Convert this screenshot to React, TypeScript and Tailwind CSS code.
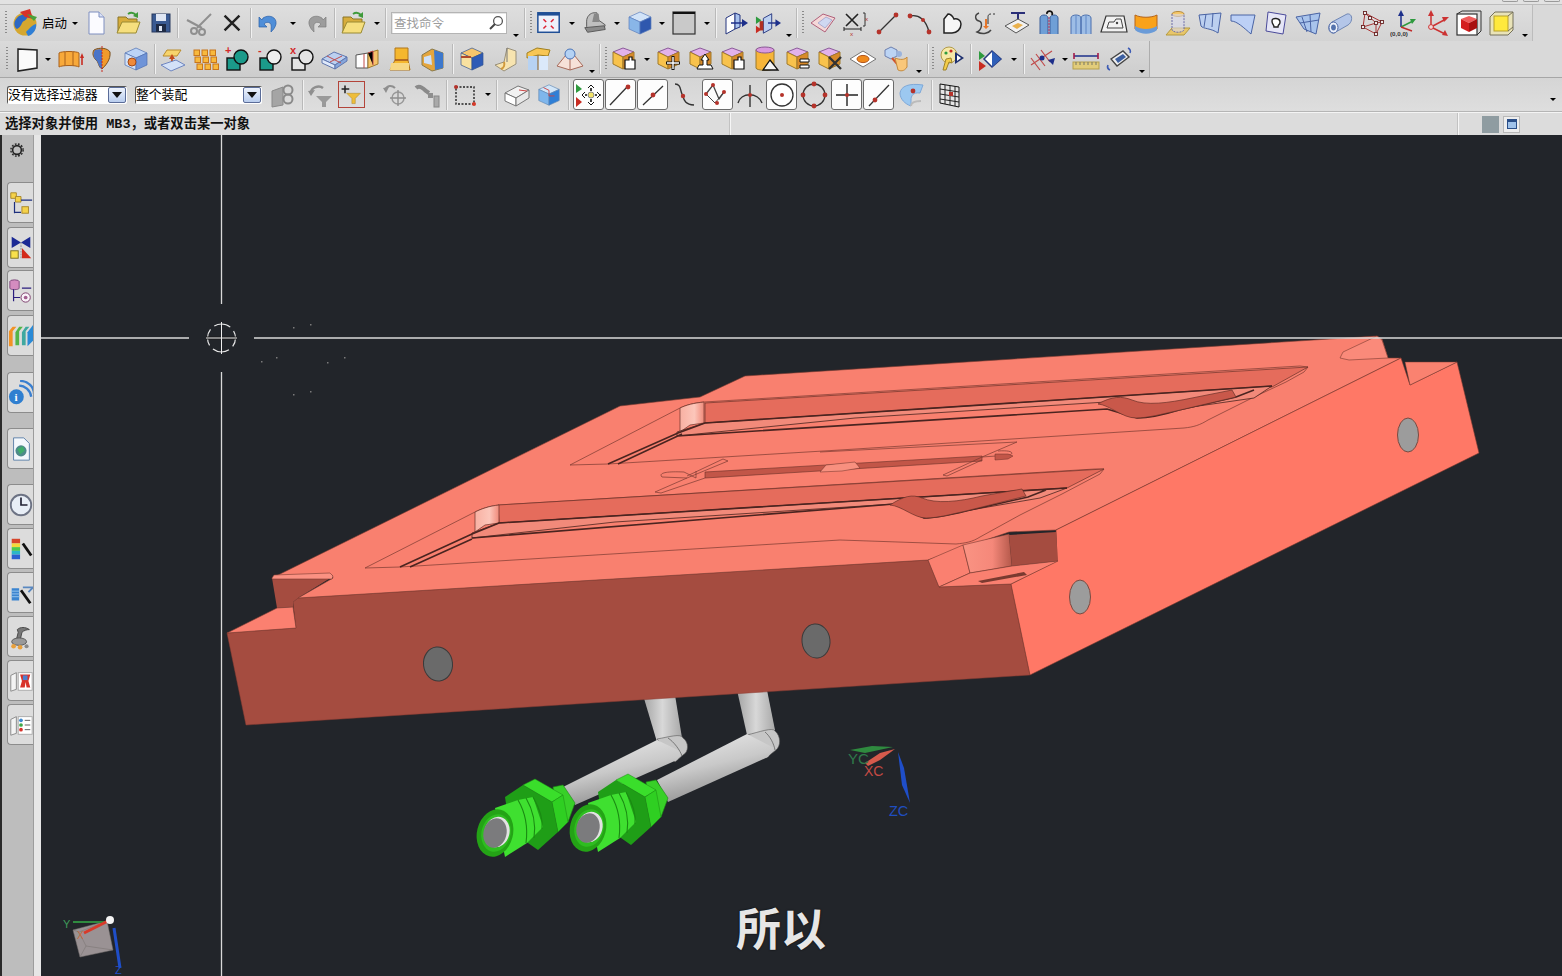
import type { ReactNode } from "react";

const CJK = "font-['Noto_Sans_CJK_SC','Noto_Sans',sans-serif]";

// ---- small pieces of the toolbars ----
const Slot = ({ w, children }: { w: string; children?: ReactNode }) => (
  <div className={`flex h-full shrink-0 items-center justify-center ${w}`}>{children}</div>
);

const Sep = () => <div className="mx-0 h-[30px] w-px shrink-0 bg-[#f1f1f1] shadow-[-1px_0_0_#b9b9b9]" />;

const Grip = ({ w }: { w: string }) => (
  <div className={`flex h-full shrink-0 items-center justify-center ${w}`}>
    <div className="h-[24px] w-[2px] bg-[repeating-linear-gradient(to_bottom,#8a8a8a_0,#8a8a8a_1px,transparent_1px,transparent_3px)]" />
  </div>
);

const Caret = ({ w }: { w: string }) => (
  <Slot w={w}>
    <div className="h-0 w-0 border-x-[3px] border-t-[3px] border-x-transparent border-t-black" />
  </Slot>
);

const LowCaret = ({ w }: { w: string }) => (
  <div className={`flex h-full shrink-0 items-end justify-center pb-[4px] ${w}`}>
    <div className="h-0 w-0 border-x-[3px] border-t-[3px] border-x-transparent border-t-black" />
  </div>
);

const Ic = ({ children, size = "h-[28px] w-[28px]" }: { children: ReactNode; size?: string }) => (
  <svg viewBox="0 0 28 28" className={`block ${size}`}>
    {children}
  </svg>
);

const Cube = ({ t = "#ffe08a", l = "#f7b733", r = "#e78a1e", s = "#8a6a3a" }: { t?: string; l?: string; r?: string; s?: string }) => (
  <g stroke={s} strokeWidth="0.7">
    <polygon points="14,3 25,8 14,13 3,8" fill={t} />
    <polygon points="3,8 14,13 14,25 3,20" fill={l} />
    <polygon points="25,8 14,13 14,25 25,20" fill={r} />
  </g>
);

const Dot = ({ x, y, r = 2 }: { x: number; y: number; r?: number }) => <circle cx={x} cy={y} r={r} fill="#b5332b" />;

const ln = { stroke: "#333", strokeWidth: 1.4, fill: "none" } as const;

// ---- row 1 icons ----
const r1Series: ReactNode[] = [
  <><polygon points="2,14 14,5 26,9 16,23" fill="#f4d8d8" stroke="#b0607a" strokeWidth="1" /><path d="M9 14l8-6 6 3-7 8z" fill="#cfd8f2" stroke="#8a8fc0" strokeWidth=".6" /></>,
  <><path d="M5 5l12 12M17 5L5 17" stroke="#222" strokeWidth="1.6" /><path d="M3 20h17M3 18v4M20 18v4" stroke="#222" strokeWidth="1" /><path d="M22 4h2v13h-2" {...ln} strokeWidth="1" /><text x="24" y="12" fontSize="6" fill="#b5332b">x</text><text x="9" y="27" fontSize="6" fill="#b5332b">x</text></>,
  <><path d="M5 23L22 6" stroke="#333" strokeWidth="1.3" /><Dot x={5} y={23} r={2.4} /><Dot x={22} y={6} r={2.4} /></>,
  <><path d="M4 7c9-2 16 4 19 16" stroke="#333" strokeWidth="1.4" fill="none" /><Dot x={4} y={7} r={2.4} /><Dot x={17} y={11} r={2} /><Dot x={23} y={23} r={2.4} /></>,
  <path d="M6 24V10l4-5c3 0 5 3 6 5 3-1 7 1 7 5 0 5-4 9-9 9z" fill="#f6f6f6" stroke="#222" strokeWidth="1.5" />,
  <><path d="M8 4c-5 2-4 7 0 8s3 9-2 11c6 3 12 1 14-2" stroke="#444" strokeWidth="1.4" fill="none" /><path d="M20 5c-3 0-3 2-3 4v6M24 5h-2" stroke="#333" fill="none" /><path d="M14 10v7h-2l3 3 3-3h-2v-7z" fill="#e7762a" /></>,
  <><path d="M8 4h14M15 4v8" stroke="#2a2f78" strokeWidth="2" /><polygon points="2,17 15,10 26,16 13,24" fill="#f1f1f1" stroke="#555" /><polygon points="9,17 15,14 20,16 14,20" fill="#e9b04c" /></>,
  <><path d="M5 25V9c0-4 8-4 8 0v16M15 25V9c0-4 8-4 8 0v16" fill="#6f9fd6" stroke="#3a5f9a" /><path d="M12 5c-1-4 7-4 5 1" stroke="#111" strokeWidth="1.8" fill="none" /><path d="M14 8v17" stroke="#b03060" strokeDasharray="2 1" /></>,
  <><path d="M3 25V9c0-4 10-4 10 0v16M13 25V9c0-4 10-4 10 0v16" fill="#9dbde6" stroke="#4a6fae" /><path d="M8 7v18M18 7v18" stroke="#5f86c4" /></>,
  <><polygon points="6,7 24,7 27,23 1,23" fill="#f2f2f2" stroke="#333" strokeWidth="1.2" /><path d="M7 19l2-6h5l2-3h5l2 9z" fill="none" stroke="#444" /><circle cx="17" cy="14" r="1.2" fill="#444" /></>,
  <><path d="M3 6c6 3 16 3 22 0v14c-6 4-16 4-22 0z" fill="#f9a21b" stroke="#b5651d" /><path d="M3 17c6 4 16 4 22 0v4c-6 5-16 5-22 0z" fill="#6a9bd8" /></>,
  <><polygon points="2,26 8,19 26,19 20,26" fill="#e8c66a" stroke="#b59a3c" /><ellipse cx="14" cy="5" rx="6" ry="2.5" fill="#f5c76a" stroke="#b58a3c" /><path d="M8 5v16c2 3 10 3 12 0V5" fill="#d9d9ea" fillOpacity=".6" stroke="#6d6da8" strokeDasharray="2 1" /></>,
  <><path d="M2 6l22-2-3 20C14 19 6 20 4 17z" fill="#bcd0f0" stroke="#4a64a4" /><path d="M9 5l-2 13M16 4l-1 14" stroke="#4a64a4" /></>,
  <path d="M2 6h24l-4 19C15 19 8 12 2 12z" fill="#bcd0f6" stroke="#4a64a4" />,
  <><path d="M7 3l18 3-3 19-17-3z" fill="#e6e6f6" stroke="#4a4a9a" /><path d="M11 12c0-4 8-3 8 1s-2 1-2 5h-4c0-3-2-2-2-6z" fill="#fff" stroke="#222" strokeWidth="1.4" /></>,
  <><polygon points="2,8 26,4 22,25 10,20" fill="#a9c4ec" stroke="#4a64a4" /><path d="M6 14l19-3M8 8l5 15M16 6l1 17" stroke="#4a64a4" fill="none" /></>,
  <><path d="M6 13L21 5c6-1 6 8 1 11L8 24C2 25 1 16 6 13z" fill="#b4c6e8" stroke="#7087b4" /><ellipse cx="7.5" cy="18.5" rx="4.5" ry="5.5" fill="#eef2fb" stroke="#4a64a4" /><ellipse cx="7.5" cy="18.5" rx="2.4" ry="3" fill="#5573ad" /></>,
  <><path d="M7 4l-2 14 13 7 6-12z" fill="none" stroke="#a33" /><path d="M7 4l11 10-13 4M18 14v11M18 14l6-1" stroke="#a33" fill="none" />{[[7, 4], [5, 18], [18, 25], [24, 13], [18, 14], [12, 9]].map(([x, y], i) => <rect key={i} x={x - 1.5} y={y - 1.5} width="3" height="3" fill="#eee" stroke="#622" strokeWidth=".9" />)}</>,
  <><path d="M11 18V4" stroke="#1d2f8a" strokeWidth="1.5" /><polygon points="11,1 8,7 14,7" fill="#1d2f8a" /><path d="M11 18l12-6" stroke="#2e9a3e" strokeWidth="1.5" /><polygon points="26,10 20,10 22,15" fill="#2e9a3e" /><path d="M11 18l11 4" stroke="#c02b2b" strokeWidth="1.5" /><text x="0" y="27" fontSize="6.2" fontWeight="700" fill="#333" fontFamily="Liberation Sans">(0,0,0)</text></>,
  <><path d="M8 18V5M8 18l15-8M8 18l14 7" stroke="#c33" strokeWidth="1.5" /><polygon points="8,1 5,7 11,7" fill="#c33" /><polygon points="26,8 19,8 21,13" fill="#c33" /><polygon points="25,27 19,26 22,21" fill="#c33" /><circle cx="8" cy="18" r="2.4" fill="#f3d8d8" stroke="#c33" /></>,
  <><rect x="2" y="5" width="20" height="21" fill="#fff" stroke="#333" strokeWidth="1.2" /><path d="M2 5l5-3h19v20l-4 4" fill="none" stroke="#333" /><polygon points="14,7 22,10 14,14 6,10" fill="#f05a5a" /><polygon points="6,10 14,14 14,23 6,19" fill="#d41f1f" /><polygon points="22,10 14,14 14,23 22,19" fill="#a81212" /></>,
  <><path d="M3 8l5-5h18v18l-5 5H3z" fill="#e9e3b8" stroke="#75705a" /><rect x="7" y="7" width="14" height="15" fill="#ffe93d" stroke="#b8a12c" /><path d="M21 7l5-4M21 22l5-4" stroke="#75705a" /></>,
];

const Row1 = () => (
  <div className="flex h-[36px] w-[1533px] items-center border-r border-[#bcbcbc] bg-[linear-gradient(to_bottom,#dedede,#d3d3d3)]">
    <Grip w="w-[12px]" />
    <Slot w="w-[28px]">
      <Ic>
        <circle cx="13" cy="15" r="11.5" fill="#d5a72f" />
        <path d="M3 12c3-7 10-8 15-5-3 0-3 4-6 5s-2 6-7 8c-3-2-3-6-2-8z" fill="#2d68c4" />
        <path d="M14 23c3-3 6-7 10-8 1 5-3 11-8 12z" fill="#2f7fd6" />
        <polygon points="8,3 18,0 21,10 13,8" fill="#d8322a" />
        <path d="M15 5l10 3-3 4" fill="#49a23c" />
      </Ic>
    </Slot>
    <div className={`${CJK} w-[29px] shrink-0 text-center text-[12.5px] leading-none text-black`}>启动</div>
    <Caret w="w-[11px]" />
    <Slot w="w-[32px]">
      <Ic><path d="M7 3h10l5 5v17H7z" fill="#fbfbff" stroke="#7f8fc0" /><path d="M17 3v5h5" fill="#dbe2f6" stroke="#7f8fc0" /></Ic>
    </Slot>
    <Slot w="w-[31px]">
      <Ic><path d="M4 8h8l2 2h9v4H9l-5 9z" fill="#d7ad3c" stroke="#8a7526" /><path d="M8 13h18l-4 11H3z" fill="#f6df7e" stroke="#9a8a32" /><path d="M14 5c3-2 6-1 8 1" stroke="#3f9a3a" strokeWidth="2" fill="none" /><polygon points="24,9 19,7 24,3" fill="#3f9a3a" /></Ic>
    </Slot>
    <Slot w="w-[35px]">
      <Ic><rect x="5" y="5" width="18" height="18" fill="#3a5a92" stroke="#26395f" /><rect x="9" y="5" width="10" height="7" fill="#dfe6f3" /><rect x="9" y="15" width="10" height="8" fill="#1f2b45" /><rect x="12" y="17" width="3" height="5" fill="#dfe6f3" /></Ic>
    </Slot>
    <Sep />
    <Slot w="w-[40px]">
      <Ic><g stroke="#8f8f8f" strokeWidth="2" fill="none"><path d="M2 11l15 8" /><path d="M26 5L12 19" /><circle cx="17" cy="23" r="3" /><circle cx="9" cy="22" r="3" /></g></Ic>
    </Slot>
    <Slot w="w-[26px]">
      <Ic><path d="M6 6l16 16M22 6L6 22" stroke="#222" strokeWidth="2.6" /></Ic>
    </Slot>
    <div className="w-[6px] shrink-0" />
    <Sep />
    <Slot w="w-[34px]">
      <Ic><path d="M8 9c6-4 14-1 13 6-1 4-3 6-5 8 0-4 1-7-1-9-2-1-4-1-6 1l3 3H4V8l3 3z" fill="#4f8ed8" stroke="#2a5fa8" strokeWidth=".7" /></Ic>
    </Slot>
    <Caret w="w-[14px]" />
    <Slot w="w-[32px]">
      <Ic><path d="M20 9c-6-4-14-1-13 6 1 4 3 6 5 8 0-4-1-7 1-9 2-1 4-1 6 1l-3 3h8V8l-3 3z" fill="#9d9d9d" stroke="#7c7c7c" strokeWidth=".7" /></Ic>
    </Slot>
    <div className="w-[3px] shrink-0" />
    <Sep />
    <Slot w="w-[34px]">
      <Ic><path d="M4 8h8l2 2h9v4H9l-5 9z" fill="#d7ad3c" stroke="#8a7526" /><path d="M8 13h18l-4 11H3z" fill="#f6df7e" stroke="#9a8a32" /><path d="M14 5c3-2 6-1 8 1" stroke="#3f9a3a" strokeWidth="2" fill="none" /><polygon points="24,9 19,7 24,3" fill="#3f9a3a" /></Ic>
    </Slot>
    <Caret w="w-[14px]" />
    <div className="w-[2px] shrink-0" />
    <Sep />
    <div className="ml-[4px] flex h-[22px] w-[116px] shrink-0 items-center justify-between border border-[#b4b4b4] bg-white pl-[2px] pr-[2px] shadow-[inset_1px_1px_0_#e6e6e6]">
      <span className={`${CJK} text-[12.5px] leading-none text-[#9c9c9c]`}>查找命令</span>
      <svg viewBox="0 0 16 16" className="h-[16px] w-[16px]">
        <circle cx="10" cy="6" r="4.4" fill="#fff" stroke="#555" strokeWidth="1.3" />
        <path d="M7 9l-5 5" stroke="#444" strokeWidth="2" />
      </svg>
    </div>
    <LowCaret w="w-[18px]" />
    <Sep />
    <Grip w="w-[10px]" />
    <Slot w="w-[26px]">
      <Ic><rect x="2" y="3" width="23" height="21" fill="#eef1fa" stroke="#1f4f96" strokeWidth="1.6" /><rect x="2" y="3" width="23" height="3" fill="#1f4f96" /><path d="M8 10l3 3M19 10l-3 3M8 20l3-3M19 20l-3-3" stroke="#d23" strokeWidth="1.6" /></Ic>
    </Slot>
    <Caret w="w-[20px]" />
    <Slot w="w-[26px]">
      <Ic><path d="M5 18V12c0-5 4-9 8-9h3l2 8 7 5-1 3-17 2z" fill="#c0c0c0" stroke="#555" /><path d="M13 4l5 0 1 9h-8z" fill="#888" /><polygon points="3,19 24,17 25,21 6,24" fill="#8c8c8c" stroke="#555" /></Ic>
    </Slot>
    <Caret w="w-[18px]" />
    <Slot w="w-[28px]">
      <Ic><Cube t="#d1e3f8" l="#89b6e8" r="#2f58ae" s="#5b7ebd" /></Ic>
    </Slot>
    <Caret w="w-[16px]" />
    <Slot w="w-[28px]">
      <Ic><rect x="3" y="3" width="22" height="22" fill="#c9c9c9" stroke="#333" strokeWidth="1.2" /><rect x="3" y="3" width="22" height="2" fill="#111" /></Ic>
    </Slot>
    <Caret w="w-[18px]" />
    <Sep />
    <Slot w="w-[38px]">
      <Ic><polygon points="4,9 13,4 13,20 4,25" fill="#fdfdfd" stroke="#25357e" /><polygon points="13,4 18,6 18,18 13,20" fill="#a9c3ee" stroke="#25357e" /><path d="M9 14h12" stroke="#1d2f8a" strokeWidth="1.5" /><polygon points="26,14 20,10 20,18" fill="#1d2f8a" /></Ic>
    </Slot>
    <Slot w="w-[26px]">
      <Ic><polygon points="9,9 18,4 18,20 9,25" fill="#bcd0f0" stroke="#25357e" /><path d="M14 14h9" stroke="#1d2f8a" strokeWidth="1.5" /><polygon points="28,14 22,10 22,18" fill="#1d2f8a" /><polygon points="1,7 7,11 1,15" fill="#2e9a3e" /><polygon points="1,17 7,21 1,25" fill="#c82c22" /><rect x="5" y="12" width="4" height="10" fill="#b03020" /></Ic>
    </Slot>
    <LowCaret w="w-[16px]" />
    <Sep />
    <Grip w="w-[9px]" />
    {r1Series.map((ic, i) => (
      <Slot key={i} w="w-[32.3px]"><Ic>{ic}</Ic></Slot>
    ))}
    <LowCaret w="w-[15px]" />
  </div>
);

// ---- row 2 icons ----
const BoolIc = ({ mark, circle, square, color }: { mark: string; circle: string; square: string; color: string }) => (
  <Ic>
    <rect x="3" y="13" width="13" height="12" fill={square} stroke="#111" strokeWidth="1.4" />
    <circle cx="17" cy="12" r="7" fill={circle} stroke="#111" strokeWidth="1.4" />
    <text x="1" y="9" fontSize="11" fontWeight="700" fill={color} fontFamily="Liberation Sans">{mark}</text>
  </Ic>
);

const Face = ({ children }: { children?: ReactNode }) => (
  <Ic>
    <polygon points="12,3 23,7 12,12 2,7" fill="#e2b2ea" stroke="#8a5a9a" />
    <polygon points="2,7 12,12 12,24 2,19" fill="#f8c24c" stroke="#a07a2a" />
    <polygon points="23,7 12,12 12,24 23,19" fill="#d98a2a" stroke="#a07a2a" />
    {children}
  </Ic>
);

const HandMark = () => <path d="M14 15h4v-3h3v3h3v9H14z" fill="#fff" stroke="#111" strokeWidth="1.2" />;

const Row2 = () => (
  <div className="flex h-[36px] w-[1150px] items-center border-r border-[#adadad] bg-[linear-gradient(to_bottom,#dadada,#cdcdcd)]">
    <Grip w="w-[13px]" />
    <Slot w="w-[28px]"><Ic><polygon points="5,4 24,5 24,23 5,26" fill="#fafafa" stroke="#222" strokeWidth="1.5" /></Ic></Slot>
    <Caret w="w-[14px]" />
    <Slot w="w-[30px]"><Ic><path d="M3 22V8c2-2 18-2 20 0v14c-3-2-17-2-20 0z" fill="#f8a93a" stroke="#a8601c" /><path d="M9 7v14M17 7v14" stroke="#a8601c" /><path d="M26 20v-8" stroke="#c82c22" strokeWidth="1.6" /><polygon points="26,8 24,13 28,13" fill="#c82c22" /></Ic></Slot>
    <Slot w="w-[32px]"><Ic><path d="M7 5c5-3 14-2 16 2 1 8-5 14-8 17-4-2-3-7-6-9-3-3-4-7-2-10z" fill="#f19a2c" stroke="#7a4f1c" /><path d="M8 5c3-1 6-1 7 0v19c-4-2-3-7-6-9-3-3-3-7-1-10z" fill="#4a74c8" /><path d="M15 1v26" stroke="#c82c22" strokeDasharray="2 1" /></Ic></Slot>
    <Slot w="w-[38px]"><Ic><Cube t="#bcd4f6" l="#cfe0f8" r="#6f94d8" s="#4d6fb0" /><circle cx="10" cy="17" r="4" fill="#ef8a3a" stroke="#a14a1a" /></Ic></Slot>
    <Sep />
    <Slot w="w-[34px]"><Ic><polygon points="8,5 22,5 18,11 4,11" fill="#f7d46c" stroke="#b98c2c" /><path d="M13 19v-8" stroke="#c54c1c" strokeWidth="1.8" /><polygon points="13,9 10,14 16,14" fill="#c54c1c" /><polygon points="2,20 17,15 26,20 12,26" fill="#d3e1f8" stroke="#6f86c0" /></Ic></Slot>
    <Slot w="w-[32.3px]"><Ic>{[[2, 5], [10, 5], [18, 5], [3, 12], [11, 12], [19, 12], [5, 19], [13, 19], [21, 19]].map(([x, y], i) => <rect key={i} x={x} y={y} width="5.5" height="5.5" fill="#f8b93c" stroke="#c8761c" />)}</Ic></Slot>
    <Slot w="w-[32.3px]"><BoolIc mark="+" circle="#1b9a8a" square="#1b9a8a" color="#d32a2a" /></Slot>
    <Slot w="w-[32.3px]"><BoolIc mark="-" circle="#eeeeee" square="#1b9a8a" color="#d32a2a" /></Slot>
    <Slot w="w-[32.3px]"><BoolIc mark="x" circle="#e4e4e4" square="#e4e4e4" color="#d32a2a" /></Slot>
    <Slot w="w-[32.3px]"><Ic><polygon points="1,14 13,7 26,12 14,20" fill="#bcd0f0" stroke="#5f76ae" /><polygon points="1,14 14,20 14,24 1,18" fill="#dfe9fa" stroke="#5f76ae" /><polygon points="26,12 14,20 14,24 26,16" fill="#86a6dc" stroke="#5f76ae" /><path d="M6 11l14 7M9 17l12-6" stroke="#c14b4b" /></Ic></Slot>
    <Slot w="w-[32.3px]"><Ic><polygon points="2,10 14,8 14,23 2,23" fill="#fff" stroke="#555" /><polygon points="14,8 24,5 24,19 14,23" fill="#f6c36a" stroke="#a07a2a" /><path d="M10 9v14M14 8l5-2v14" stroke="#c14b4b" /></Ic></Slot>
    <Slot w="w-[32.3px]"><Ic><path d="M9 3h13v12l2 10H4l5-10z" fill="#f5b72e" stroke="#b0771c" /><path d="M9 15h13" stroke="#8a3a1a" strokeWidth="1.2" /><path d="M5 18l18 0v7H4z" fill="#f7d884" /></Ic></Slot>
    <Slot w="w-[32.3px]"><Ic><polygon points="14,4 25,8 25,23 14,26 4,20 4,10" fill="#e4a53c" stroke="#8a7a4a" /><polygon points="16,5 25,8 25,23 17,25" fill="#3d78cc" /><polygon points="6,12 13,10 14,20 6,18" fill="#cfe0f6" /></Ic></Slot>
    <div className="w-[5px] shrink-0" />
    <Sep />
    <Slot w="w-[36px]"><Ic><Cube t="#f7c66c" l="#f8e1a0" r="#2e5bb6" s="#33558f" /><rect x="3" y="11" width="10" height="2" fill="#b04a2a" /></Ic></Slot>
    <Slot w="w-[32px]"><Ic><path d="M15 3l9 3v13l-12 7-9-6 9-3z" fill="#f7e4b0" stroke="#99907a" /><path d="M15 3v14" stroke="#777" /><path d="M12 17c1 3 0 6-3 7" stroke="#d19a3c" fill="none" strokeWidth="2" /></Ic></Slot>
    <Slot w="w-[32px]"><Ic><polygon points="3,8 13,3 26,5 24,11 14,10 3,13" fill="#f8c654" stroke="#a0801f" /><rect x="4" y="11" width="10" height="14" fill="#b7d2f2" /><rect x="14" y="11" width="10" height="14" fill="#dbe9fa" /><path d="M14 10v15" stroke="#8a5c1a" /></Ic></Slot>
    <Slot w="w-[32px]"><Ic><polygon points="14,5 27,21 14,25 1,21" fill="#f6e1d8" stroke="#a66a5a" /><path d="M14 5v20" stroke="#a66a5a" /><circle cx="14" cy="9" r="5" fill="#b4d2f4" stroke="#4a74b8" /></Ic></Slot>
    <LowCaret w="w-[12px]" />
    <div className="w-[2px] shrink-0" />
    <Sep />
    <Grip w="w-[9px]" />
    <Slot w="w-[30px]"><Face><HandMark /></Face></Slot>
    <Caret w="w-[13px]" />
    <Slot w="w-[32.3px]"><Face><path d="M17 11v14M10 18h14" stroke="#111" strokeWidth="3" /><path d="M17 12v12M11 18h12" stroke="#fff" strokeWidth="1.4" /></Face></Slot>
    <Slot w="w-[32.3px]"><Face><polygon points="17,9 21,15 19,15 19,20 23,20 25,24 9,24 11,20 15,20 15,15 13,15" fill="#fff" stroke="#111" /></Face></Slot>
    <Slot w="w-[32.3px]"><Face><HandMark /></Face></Slot>
    <Slot w="w-[32.3px]"><Ic><path d="M4 5c0-3 18-3 18 0v18c0 3-18 3-18 0z" fill="#f7b53a" stroke="#9a7a2a" /><ellipse cx="13" cy="5" rx="9" ry="3" fill="#d99ae0" stroke="#8a5a9a" /><polygon points="18,15 26,25 11,25" fill="#f5f5f5" stroke="#111" strokeWidth="1.3" /></Ic></Slot>
    <Slot w="w-[32.3px]"><Face><path d="M15 14h9v3h-9zM15 20h9v3h-9z" fill="#fff" stroke="#111" /></Face></Slot>
    <Slot w="w-[32.3px]"><Face><path d="M12 12l12 12M24 12L12 24" stroke="#333" strokeWidth="2.4" /></Face></Slot>
    <Slot w="w-[32.3px]"><Ic><polygon points="14,6 27,14 14,22 1,14" fill="#fff" stroke="#777" /><ellipse cx="14" cy="14" rx="6" ry="3.6" fill="#f08a1c" stroke="#b2551c" /></Ic></Slot>
    <Slot w="w-[32.3px]"><Ic><polygon points="3,5 9,2 15,5 15,11 9,14 3,11" fill="#bcd4f4" stroke="#6d7fae" /><path d="M10 13l6 7" stroke="#d2522b" strokeWidth="2" /><path d="M13 13c5 2 10 2 12-1v10c-3 5-7 4-9 3z" fill="#f9c77a" stroke="#c58a3c" /><circle cx="17" cy="9" r="3" fill="#9ab3dc" /></Ic></Slot>
    <LowCaret w="w-[14px]" />
    <div className="w-[2px] shrink-0" />
    <Sep />
    <Grip w="w-[9px]" />
    <Slot w="w-[28px]"><Ic><circle cx="11" cy="10" r="8" fill="#f6e9a8" stroke="#b29a4c" /><circle cx="8" cy="8" r="1.6" fill="#2e9a3e" /><circle cx="13" cy="6" r="1.6" fill="#c82c22" /><path d="M8 14l-3 11h3l3-8 3 1-1-5z" fill="#f4cd4a" stroke="#9f8329" /><polygon points="17,7 26,13 17,19" fill="#1d2f6e" /><polygon points="19,10 23,13 19,16" fill="#fff" /></Ic></Slot>
    <div className="w-[5px] shrink-0" />
    <Sep />
    <Slot w="w-[36px]"><Ic><polygon points="3,6 9,11 3,15" fill="#2e9a3e" /><polygon points="3,16 10,21 3,26" fill="#c82c22" /><polygon points="16,6 25,14 16,22 8,14" fill="#fff" stroke="#27397c" strokeWidth="1.5" /><polygon points="16,6 25,14 16,22" fill="#2f5fb8" /></Ic></Slot>
    <Caret w="w-[12px]" />
    <div className="w-[4px] shrink-0" />
    <Sep />
    <Slot w="w-[34px]"><Ic><path d="M3 20L24 6M3 13l9 12M8 9l9 12M13 5l9 12" stroke="#c14b4b" strokeWidth="1.2" /><circle cx="14" cy="13" r="2.5" fill="#1d2f8a" /><polygon points="25,20 20,15 27,13" fill="#1d2f8a" /></Ic></Slot>
    <Caret w="w-[12px]" />
    <Slot w="w-[30px]"><Ic><path d="M2 11h24" stroke="#1d2f8a" strokeWidth="1.5" /><path d="M2 8v6M26 8v6" stroke="#a31b4a" strokeWidth="1.6" /><rect x="1" y="17" width="26" height="7" fill="#e2cc7a" stroke="#b5a04c" /><path d="M4 17v3M8 17v3M12 17v3M16 17v3M20 17v3M24 17v3" stroke="#776" /></Ic></Slot>
    <Slot w="w-[36px]"><Ic><polygon points="6,14 18,6 24,12 12,21" fill="#efefef" stroke="#444" strokeWidth="1.4" /><polygon points="10,14 18,9 21,12 13,18" fill="#3c5fa0" /><path d="M3 20c-1 2 0 4 2 5M25 8c1-2 0-4-2-5" stroke="#3d5bb4" strokeWidth="1.6" fill="none" /></Ic></Slot>
    <LowCaret w="w-[10px]" />
  </div>
);

// ---- row 3 ----
const Select = ({ w, label, gap }: { w: string; label: string; gap?: string }) => (
  <div className={`flex h-[18px] shrink-0 items-center justify-between rounded-[2px] bg-white pl-px pr-px shadow-[inset_1px_1px_0_#555] ${w} ${gap ?? ""}`}>
    <span className={`${CJK} text-[12.8px] leading-none text-black`}>{label}</span>
    <div className="flex h-[16px] w-[18px] items-center justify-center rounded-[2px] border border-[#5a6c98] bg-[linear-gradient(to_bottom,#eef3fc,#b9cdee)]">
      <div className="h-0 w-0 border-x-[5px] border-t-[6px] border-x-transparent border-t-[#111]" />
    </div>
  </div>
);

const Snap = ({ on, children }: { on?: boolean; children: ReactNode }) => (
  <Slot w="w-[32.3px]">
    <div className={`flex h-[31px] w-[31px] items-center justify-center rounded-[3px] ${on ? "border border-[#6b6b6b] bg-[#fdfdfd]" : ""}`}>
      <Ic>{children}</Ic>
    </div>
  </Slot>
);

const Row3 = () => (
  <div className="flex h-[34px] items-center border-b border-[#b5b5b5] bg-[linear-gradient(to_bottom,#d5d5d5,#dedede)]">
    <div className="w-[7px] shrink-0" />
    <Select w="w-[120px]" label="没有选择过滤器" />
    <Select w="w-[127px]" label="整个装配" gap="ml-[8px]" />
    <Slot w="w-[41px]"><Ic><polygon points="3,10 14,6 14,24 3,26" fill="#a5a5a5" stroke="#8a8a8a" /><circle cx="19" cy="9" r="4.5" fill="none" stroke="#8a8a8a" strokeWidth="2" /><circle cx="19" cy="18" r="4.5" fill="none" stroke="#8a8a8a" strokeWidth="2" /></Ic></Slot>
    <Sep />
    <Slot w="w-[32px]"><Ic><polygon points="10,15 26,15 20,21 20,26 16,26 16,21" fill="#9a9a9a" /><path d="M5 12c0-6 8-8 12-5" stroke="#8f8f8f" strokeWidth="2.6" fill="none" /><polygon points="2,10 9,9 5,15" fill="#8f8f8f" /></Ic></Slot>
    <Slot w="w-[30px]"><div className="flex h-[27px] w-[27px] items-center justify-center border border-[#b3443a]"><Ic size="h-[24px] w-[24px]"><path d="M7 3v9M3 7h9" stroke="#222" strokeWidth="1.8" /><polygon points="9,12 25,12 19,18 19,24 15,24 15,18" fill="#eebd3a" stroke="#a07a1a" strokeWidth=".5" /></Ic></div></Slot>
    <Caret w="w-[12px]" />
    <Slot w="w-[34px]"><Ic><path d="M4 9c2-5 7-5 10-2" stroke="#8f8f8f" strokeWidth="2" fill="none" /><polygon points="2,7 8,6 5,12" fill="#8f8f8f" /><circle cx="17" cy="17" r="6" fill="none" stroke="#999" strokeWidth="1.4" /><path d="M17 9v16M9 17h16" stroke="#8f8f8f" strokeWidth="1.4" /></Ic></Slot>
    <Slot w="w-[32px]"><Ic><path d="M2 7c3-3 7 0 10 3l3 2" stroke="#8a8a8a" strokeWidth="4" fill="none" /><rect x="14" y="12" width="5" height="5" fill="#8f8f8f" /><rect x="20" y="15" width="5" height="11" fill="#aaa" stroke="#888" /></Ic></Slot>
    <div className="w-[3px] shrink-0" />
    <Sep />
    <Slot w="w-[34px]"><Ic><rect x="5" y="6" width="18" height="17" fill="none" stroke="#222" strokeWidth="1.4" strokeDasharray="2 1.5" /><circle cx="5" cy="6" r="2" fill="#b5332b" /><circle cx="23" cy="23" r="2" fill="#d63a2a" /></Ic></Slot>
    <Caret w="w-[12px]" />
    <div className="w-[3px] shrink-0" />
    <Sep />
    <Slot w="w-[38px]"><Ic><polygon points="2,12 15,5 26,9 13,17" fill="#f2f2f2" stroke="#777" /><polygon points="2,12 13,17 13,25 2,20" fill="#fff" stroke="#777" /><polygon points="26,9 13,17 13,25 26,17" fill="#e8e8e8" stroke="#777" /><path d="M16 9l8 1" stroke="#c44" /></Ic></Slot>
    <Slot w="w-[26px]"><Ic><Cube t="#d2e6f8" l="#7fb6ec" r="#2f7fd6" s="#5f86b4" /><path d="M8 6l6 3v6l6 0" stroke="#c44" fill="none" /></Ic></Slot>
    <div className="w-[7px] shrink-0" />
    <Sep />
    <div className="w-[2px] shrink-0" />
    <Snap on>
      <polygon points="2,3 8,8 2,12" fill="#2e9a3e" /><polygon points="2,16 8,21 2,26" fill="#c82c22" />
      <circle cx="17" cy="14" r="3" fill="#f2e268" stroke="#888" />
      <path d="M17 4v6M17 18v6M8 14h5M21 14h6" stroke="#111" strokeWidth="1.6" />
      <path d="M14 7l3-3 3 3M14 21l3 3 3-3M11 11l-3 3 3 3M23 11l3 3-3 3" fill="#fff" stroke="#111" />
    </Snap>
    <Snap on><path d="M4 24L21 6" stroke="#333" strokeWidth="1.3" /><Dot x={22} y={6} r={2.4} /></Snap>
    <Snap on><path d="M4 24L24 5" stroke="#333" strokeWidth="1.3" /><Dot x={14} y={14} r={2.4} /></Snap>
    <Snap><path d="M4 3c6 0 5 6 7 10 2 4 1 10 12 11" stroke="#333" strokeWidth="1.4" fill="none" /><Dot x={12} y={15} r={2.2} /></Snap>
    <Snap on><path d="M3 13L10 4l6 14 5-7" stroke="#444" strokeWidth="1.3" fill="none" /><path d="M3 13l9 9 9-11" stroke="#444" fill="none" /><Dot x={3} y={13} /><Dot x={10} y={4} /><Dot x={21} y={11} /><Dot x={14} y={22} /></Snap>
    <Snap><path d="M2 22C5 11 22 11 26 22M14 4v22" stroke="#333" strokeWidth="1.4" fill="none" /><Dot x={14} y={14} /></Snap>
    <Snap on><circle cx="14" cy="14" r="11" fill="#fff" stroke="#333" strokeWidth="1.3" /><Dot x={14} y={14} /></Snap>
    <Snap><circle cx="14" cy="14" r="11" fill="none" stroke="#333" strokeWidth="1.3" /><Dot x={14} y={3} r={2.4} /><Dot x={14} y={25} r={2.4} /><Dot x={3} y={14} r={2.4} /><Dot x={25} y={14} r={2.4} /></Snap>
    <Snap on><path d="M3 14h22M14 3v22" stroke="#222" strokeWidth="1.4" /><Dot x={14} y={14} /></Snap>
    <Snap on><path d="M4 25L24 4" stroke="#333" strokeWidth="1.3" /><Dot x={10} y={19} r={2.4} /></Snap>
    <Snap><path d="M3 12C4 5 12 2 26 4l-3 8c-7-1-9 3-9 7 0 3 0 4 0 6-6-2-11-7-11-13z" fill="#9cc8f0" stroke="#7ea8d8" /><path d="M14 25c0-3 3-5 10-5" stroke="#bbb" strokeWidth="2" fill="none" /><Dot x={16} y={10} r={2.4} /></Snap>
    <div className="w-[5px] shrink-0" />
    <Sep />
    <Slot w="w-[32px]"><Ic><polygon points="5,3 24,6 24,26 5,22" fill="#e5e5e5" stroke="#111" /><path d="M5 8l19 3M5 13l19 3M5 18l19 3M10 4v19M15 5v19M20 5v20" stroke="#222" /><rect x="14" y="11" width="4" height="4" fill="#b5332b" /></Ic></Slot>
    <div className="ml-auto mr-[6px] mt-[10px] h-0 w-0 border-x-[3px] border-t-[3px] border-x-transparent border-t-black" />
  </div>
);

const StatusBar = () => (
  <div className="flex h-[23px] items-center border-t border-[#f4f4f4] bg-[#dcdcdc]">
    <div className={`${CJK} w-[730px] shrink-0 pl-[5px] text-[13.3px] font-bold leading-none text-[#111]`}>
      选择对象并使用<span className="font-['Liberation_Mono',monospace] text-[13.5px]"> MB3</span>，或者双击某一对象
    </div>
    <div className="h-full w-px shrink-0 bg-[#f6f6f6] shadow-[-1px_0_0_#c2c2c2]" />
    <div className="w-[727px] shrink-0" />
    <div className="h-full w-px shrink-0 bg-[#f6f6f6] shadow-[-1px_0_0_#c2c2c2]" />
    <div className="ml-[23px] flex items-center gap-[4px]">
      <div className="h-[17px] w-[17px] bg-[#8f9ca1]" />
      <div className="flex h-[17px] w-[17px] items-center justify-center border border-[#b8b8b8] bg-[#eeeeee]">
        <div className="h-[10px] w-[10px] border border-[#2a4e88] bg-[linear-gradient(to_bottom,#2a4e88_30%,#9fc2ea_30%)]" />
      </div>
    </div>
  </div>
);

// ---- left resource bar ----
const SideBtn = ({ gap, children }: { gap: string; children: ReactNode }) => (
  <div className={`flex h-[41px] w-[26px] shrink-0 items-center justify-start overflow-hidden rounded-l-[4px] border-y border-l border-[#8c8c8c] bg-[#dcdcdc] [&>svg]:h-[26px] [&>svg]:w-[26px] [&>svg]:shrink-0 ${gap}`}>
    {children}
  </div>
);

const Side = () => (
  <div className="flex h-[841px] w-[41px] shrink-0 border-l-2 border-[#2a2a2a] bg-[#bdbdbd]">
    <div className="flex w-[31px] shrink-0 flex-col items-end">
      <div className="flex h-[30px] w-full items-center justify-center">
        <svg viewBox="0 0 16 16" className="mr-[1px] h-[14px] w-[14px]">
          <circle cx="8" cy="8" r="5" fill="none" stroke="#222" strokeWidth="1.8" />
          <circle cx="8" cy="8" r="7" fill="none" stroke="#222" strokeWidth="1.6" strokeDasharray="2 1.7" />
        </svg>
      </div>
      <SideBtn gap="mt-[17px]">
        <Ic><polygon points="3,3 9,3 9,9 3,9" fill="#f5d24a" stroke="#a8872a" /><polygon points="8,7 14,7 14,13 8,13" fill="#f5d24a" stroke="#a8872a" /><path d="M7 13v12M7 24h7M14 11h12" stroke="#1d2f7e" strokeWidth="1.3" /><rect x="15" y="18" width="7" height="7" fill="#f5d24a" stroke="#a8872a" /></Ic>
      </SideBtn>
      <SideBtn gap="mt-[4px]">
        <Ic><polygon points="4,2 14,8 4,14" fill="#1c2a94" /><polygon points="24,2 14,8 24,14" fill="#1c2a94" /><rect x="3" y="17" width="8" height="8" fill="#f8e04c" stroke="#7a6d1f" /><polygon points="15,14 25,25 15,25" fill="#d32a1a" /><path d="M14 8v18" stroke="#888" strokeDasharray="2 1" /></Ic>
      </SideBtn>
      <SideBtn gap="mt-[2px]">
        <Ic><ellipse cx="7" cy="4" rx="5" ry="2" fill="#d48cc0" stroke="#7a4a7a" /><path d="M2 4v7c0 2 10 2 10 0V4" fill="#d48cc0" stroke="#7a4a7a" /><path d="M6 12v13M6 21h7M15 11h10" stroke="#2a1d7e" strokeWidth="1.3" /><circle cx="19" cy="21" r="5" fill="#f8f2f8" stroke="#7a3a6a" /><circle cx="19" cy="21" r="2" fill="#a35f90" /></Ic>
      </SideBtn>
      <SideBtn gap="mt-[4px]">
        <Ic><polygon points="1,9 5,4 9,4 5,9 5,25 1,25" fill="#f29224" /><polygon points="8,10 12,4 16,4 12,9 12,24 8,24" fill="#55b548" /><polygon points="15,10 19,4 23,4 19,9 19,24 15,24" fill="#3fa8a0" /><polygon points="21,10 27,2 27,19 21,25" fill="#2a8ad6" /></Ic>
      </SideBtn>
      <SideBtn gap="mt-[16px]">
        <Ic><circle cx="9" cy="18" r="8" fill="#2f7fd0" /><text x="7" y="23" fontSize="12" fontWeight="700" fill="#fff" fontFamily="Liberation Serif">i</text><path d="M12 6c6 0 12 5 13 12M13 1c8 0 15 6 15 14" stroke="#3a7fd0" strokeWidth="2.5" fill="none" /></Ic>
      </SideBtn>
      <SideBtn gap="mt-[15px]">
        <Ic><path d="M6 2h11l6 6v18H6z" fill="#f4f8fc" stroke="#5b7ea6" /><circle cx="14" cy="16" r="6" fill="#4f8a8a" /><path d="M10 14l6-3 2 5-5 4z" fill="#3fae6a" /></Ic>
      </SideBtn>
      <SideBtn gap="mt-[15px]">
        <Ic><circle cx="14" cy="14" r="11" fill="#e8eef6" stroke="#6d7384" strokeWidth="2" /><path d="M14 6v8h7" stroke="#223" strokeWidth="1.8" fill="none" /></Ic>
      </SideBtn>
      <SideBtn gap="mt-[3px]">
        <Ic><rect x="4" y="3" width="9" height="5" fill="#d6452a" /><rect x="4" y="8" width="9" height="4" fill="#f4d83a" /><rect x="4" y="12" width="9" height="4" fill="#4fc84a" /><rect x="4" y="16" width="9" height="4" fill="#2ab5c8" /><rect x="4" y="20" width="9" height="5" fill="#2a5fd0" /><path d="M16 8l9 13" stroke="#111" strokeWidth="3" /></Ic>
      </SideBtn>
      <SideBtn gap="mt-[3px]">
        <Ic><path d="M4 9h8v13H4z" fill="#3a84d0" /><path d="M3 12h10M3 15h10M3 18h10" stroke="#9cc8ee" /><path d="M16 8h11l-5 5" stroke="#5a88c0" strokeWidth="2" fill="none" /><path d="M14 11l10 14" stroke="#111" strokeWidth="3" /></Ic>
      </SideBtn>
      <SideBtn gap="mt-[3px]">
        <Ic><path d="M10 6c3-3 9-3 13 0-3 0-6 1-8 3l-2 9-4-1 2-8z" fill="#777" stroke="#444" /><ellipse cx="12" cy="19" rx="8" ry="4" fill="#999" stroke="#555" /><circle cx="6" cy="24" r="2.5" fill="#e8a03c" /><circle cx="13" cy="25" r="2.5" fill="#e8a03c" /><circle cx="20" cy="24" r="2.2" fill="#888" /></Ic>
      </SideBtn>
      <SideBtn gap="mt-[3px]">
        <Ic><polygon points="3,8 9,5 9,23 3,25" fill="#f4f4f4" stroke="#888" /><rect x="11" y="5" width="15" height="19" fill="#fff" stroke="#aaa" /><path d="M13 7h11l-2 7 2 7h-4l-1-6-1 6h-5l2-7z" fill="#d8322a" /><rect x="16" y="8" width="5" height="5" fill="#4d7fd0" /></Ic>
      </SideBtn>
      <SideBtn gap="mt-[3px]">
        <Ic><polygon points="3,8 9,5 9,23 3,25" fill="#f4f4f4" stroke="#888" /><rect x="11" y="5" width="15" height="19" fill="#fff" stroke="#aaa" /><circle cx="14" cy="9" r="2" fill="#3f8ad0" /><circle cx="14" cy="14" r="2" fill="#3fa84a" /><circle cx="14" cy="19" r="2" fill="#d8322a" /><path d="M18 9h6M18 14h6M18 19h6" stroke="#555" /></Ic>
      </SideBtn>
    </div>
    <div className="w-[8px] shrink-0 bg-[#e6e6e6] shadow-[inset_1px_0_0_#9c9c9c]" />
  </div>
);

// ---- 3d view ----
const Speck = () => (
  <g fill="#7a7a7a">
    {[[293, 327], [310, 324], [261, 361], [276, 357], [327, 362], [344, 357], [293, 394], [310, 391]].map(([x, y], i) => (
      <rect key={i} x={x} y={y} width="1.5" height="1.5" />
    ))}
  </g>
);

const Fitting = ({ dx, dy }: { dx: number; dy: number }) => (
  <g transform={`translate(${dx} ${dy})`}>
    {/* back flange, hex nut, threaded body, front ring */}
    <polygon points="553,787 563,785 575,803 568,822 555,800" fill="#38d028" stroke="#1a8a12" strokeWidth=".6" />
    <polygon points="505,797 523,785 552,802 558,832 538,850 528,843 510,830" fill="#1f9e17" />
    <polygon points="523,785 535,779 563,795 552,802" fill="#3ade2b" stroke="#1a8a12" strokeWidth=".5" />
    <polygon points="552,802 563,795 568,822 558,832" fill="#2fcf22" stroke="#1a8a12" strokeWidth=".5" />
    <polygon points="495,808 518,800 533,797 543,827 527,843 505,857" fill="#3fe030" />
    <path d="M518 800c7 12 10 28 8 43M526 798c7 12 10 26 8 40M533 797c7 12 10 24 9 32" stroke="#1a8a12" strokeWidth="1.1" fill="none" />
    <ellipse cx="495" cy="833" rx="18" ry="24" transform="rotate(14 495 833)" fill="#24a316" />
    <ellipse cx="496" cy="833" rx="14.5" ry="19" transform="rotate(14 496 833)" fill="#2ebd20" />
    <ellipse cx="497" cy="832" rx="12.5" ry="15.5" transform="rotate(14 497 832)" fill="#e2e2e2" />
    <ellipse cx="495" cy="833" rx="11.5" ry="15" transform="rotate(14 495 833)" fill="#7b7b7d" />
  </g>
);

function Pocket({ outline, wall, corner, strip, groove, bulge }: { outline: string; wall: string; corner: string; strip: string; groove: string; bulge: string }) {
  return (
    <g>
      <path d={outline} fill="#f9806f" stroke="#7a3a30" strokeWidth=".7" />
      <polygon points={wall} fill="#e56c5c" stroke="#6a3028" strokeWidth=".7" />
      <path d={corner} fill="url(#pocket-r)" stroke="#6a3028" strokeWidth=".7" />
      <polygon points={strip} fill="#f28a7a" stroke="#4a2420" strokeWidth=".8" />
      <path d={groove} stroke="#4a2420" strokeWidth="1.6" fill="none" />
      <path d={bulge} fill="#c9584a" stroke="#6a3028" strokeWidth=".7" />
    </g>
  );
}

const Model = () => (
  <svg viewBox="41 135 1521 841" className="block h-[841px] w-[1521px]">
    <defs>
      <linearGradient id="pipe-h" x1="0" y1="0" x2="0.4" y2="1">
        <stop offset="0" stopColor="#eeeeee" />
        <stop offset="0.55" stopColor="#c9c9c9" />
        <stop offset="1" stopColor="#8f8f8f" />
      </linearGradient>
      <linearGradient id="pipe-v" x1="0" y1="0" x2="1" y2="0">
        <stop offset="0" stopColor="#a3a3a3" />
        <stop offset="0.5" stopColor="#d8d8d8" />
        <stop offset="1" stopColor="#a8a8a8" />
      </linearGradient>
      <linearGradient id="corner-f" x1="0" y1="0" x2="1" y2="0">
        <stop offset="0" stopColor="#fa9383" />
        <stop offset="0.6" stopColor="#f5887a" />
        <stop offset="1" stopColor="#b4584a" />
      </linearGradient>
      <linearGradient id="pocket-r" x1="0" y1="0" x2="1" y2="0">
        <stop offset="0" stopColor="#f8b0a2" />
        <stop offset="0.6" stopColor="#fcc6ba" />
        <stop offset="1" stopColor="#f08a7a" />
      </linearGradient>
    </defs>

    {/* pipes go behind the plate */}
    <polygon points="643,695 675,695 682,738 657,742" fill="url(#pipe-v)" />
    <polygon points="737,690 767,690 775,730 747,735" fill="url(#pipe-v)" />
    <path d="M657 739c12-2 24-6 26-1 6 4 6 14 0 17l-8 7z" fill="#c6c6c6" stroke="#555" strokeWidth=".6" />
    <path d="M747 735c12-3 26-8 28-4 6 5 6 15 1 19l-10 8z" fill="#c6c6c6" stroke="#555" strokeWidth=".6" />
    <polygon points="657,740 682,752 677,760 575,805 563,787" fill="url(#pipe-h)" />
    <polygon points="747,734 774,748 768,757 668,802 657,780" fill="url(#pipe-h)" />
    <path d="M668 738c6 4 12 12 14 18M765 732c5 4 9 12 10 18" stroke="#555" strokeWidth=".7" fill="none" />
    <Fitting dx={0} dy={0} />
    <Fitting dx={93} dy={-5} />

    {/* front face */}
    <polygon points="227,633 296,628 293,602 298,598 928,560 939,587 1011,584 1030,675 246,725" fill="#a54c40" stroke="#8a3c32" strokeWidth=".5" />
    {/* left step */}
    <polygon points="272,578 332,577 298,598 293,602 293,607 277,608" fill="#a54c40" />
    <polygon points="227,633 277,608 293,607 296,628" fill="#fb8070" stroke="#7a3a30" strokeWidth=".6" />

    {/* top face */}
    <polygon points="272,578 620,406 700,397 745,376 1377,336 1382,339 1388,358 1401,358 1056,530 1009,532 928,560 298,598 333,578 332,575" fill="#f9806f" stroke="#7a3a30" strokeWidth=".6" />
    <path d="M272 578l2 -3 56 -2 3 3-1 3-60 0z" fill="#fb9182" stroke="#7a3a30" strokeWidth=".6" />

    {/* right face */}
    <polygon points="1401,358 1410,385 1457,362 1479,453 1030,675 1011,584 1057,561 1056,530" fill="#ff7866" stroke="#7a3a30" strokeWidth=".6" />
    <polygon points="1405,362 1457,362 1410,385" fill="#fa8270" stroke="#7a3a30" strokeWidth=".5" />
    <polygon points="1340,358 1343,352 1377,336 1382,340 1388,358 1349,360" fill="#fa8a7a" stroke="#7a3a30" strokeWidth=".6" />

    {/* right corner pocket */}
    <polygon points="928,560 963,545 970,573 939,587" fill="#fa8070" stroke="#7a3a30" strokeWidth=".6" />
    <polygon points="963,545 1009,534 1012,566 970,573" fill="url(#corner-f)" stroke="#7a3a30" strokeWidth=".6" />
    <polygon points="1009,535 1056,532 1058,561 1012,566" fill="#a54c40" />
    <polygon points="939,587 970,573 1012,566 1058,561 1011,584" fill="#fa8070" stroke="#7a3a30" strokeWidth=".6" />
    <polygon points="978,581 1024,572 1027,575 982,583" fill="#7a3a30" />

    {/* upper pocket */}
    <Pocket
      outline="M570 465l110-57c6-3 14-5 24-6L1300 366l8 1-4 5-18 10-32 15-46 23c-8 5-14 7-24 8L840 450 608 464z"
      wall="705,403 1308,367 1272,387 705,423"
      corner="M680 408c6-3 14-5 24-6v21l-14 2-10 7z"
      strip="677,432 705,423 1272,386 1254,398 1136,415 1106,402 855,418 677,436"
      groove="M608 464l70-31 27-10 567-37M618 464l64-30M677 436l430-27 30 9c12 0 26-3 42-8l57-13 18-7"
      bulge="M1098 404c12 1 24 14 38 14 12 0 26-4 40-7l60-14-4-7-40 8c-24 5-46 8-60 2-10-4-20-4-34 4z"
    />
    {/* lower pocket */}
    <Pocket
      outline="M365 568l110-56c6-3 14-6 24-7l596-36 9 0-4 5-38 20-42 21-40 22c-8 5-14 6-24 7L840 540 400 567z"
      wall="498,505 1104,469 1067,488 499,523"
      corner="M475 512c6-3 14-6 24-7v18l-14 2-10 7z"
      strip="472,533 499,523 1067,488 1040,498 924,518 894,504 615,522 472,538"
      groove="M400 567l72-33 27-11 568-35M410 567l62-28M472 538l422-34 30 14c12 0 26-3 42-7l62-14 18-7"
      bulge="M890 505c12 1 24 13 36 13 12 0 26-4 40-7l60-15-4-7-40 7c-24 6-46 8-60 2-10-4-18-2-32 7z"
    />

    {/* middle slot */}
    <polygon points="705,472 982,456 982,461 705,478" fill="#c25648" stroke="#6a3028" strokeWidth=".6" />
    <polygon points="820,472 826,465 855,462 860,468 842,471" fill="#f8907f" stroke="#6a3028" strokeWidth=".5" />
    <path d="M655 492l32-14-25-1c-3-3 0-6 22-5l12 6v-7M687 478l41-17-5-2-36 17M655 492l6 1 44-15M820 452l197-10-35 15M943 475l39-18 28-2c4-2 2-5-12-4M943 475l4 1 35-16" stroke="#7a3a30" strokeWidth=".7" fill="none" />
    <polygon points="995,454 1008,454 1013,456 1008,459 995,460" fill="#c25648" stroke="#6a3028" strokeWidth=".5" />

    {/* water holes */}
    <ellipse cx="438" cy="664" rx="14.5" ry="17" transform="rotate(-6 438 664)" fill="#6a6a6a" stroke="#3a3a3a" />
    <ellipse cx="816" cy="641" rx="14" ry="17" transform="rotate(-6 816 641)" fill="#6a6a6a" stroke="#3a3a3a" />
    <ellipse cx="1080" cy="597" rx="10.5" ry="17" fill="#9c9c9c" stroke="#7a4a40" />
    <ellipse cx="1408" cy="435" rx="10.5" ry="17" fill="#9c9c9c" stroke="#7a4a40" />

    {/* work coordinate triad */}
    <polygon points="850,750 872,746 893,747 865,753" fill="#2f8a3f" />
    <polygon points="865,763 880,753 895,749 880,760 868,766" fill="#d65a4c" />
    <polygon points="898,752 904,768 910,803 902,785" fill="#1f4ec8" />
    <text x="848" y="764" fontSize="15" fill="#2f7a4a" fontFamily="Liberation Sans">YC</text>
    <text x="864" y="776" fontSize="14" fill="#c44a44" fontFamily="Liberation Sans">XC</text>
    <text x="889" y="816" fontSize="14.5" fill="#1f4ec0" fontFamily="Liberation Sans">ZC</text>

    {/* view triad */}
    <polygon points="73,930 107,921 113,950 80,957" fill="#9a9294" stroke="#77706f" strokeWidth=".5" />
    <path d="M73 930l6 2 7 14-6 11M86 946l27 4M79 932l28-11" stroke="#77706f" strokeWidth=".5" fill="none" />
    <path d="M73 922h36" stroke="#2f8a3f" strokeWidth="2" />
    <path d="M108 921l-24 12" stroke="#d83a2a" strokeWidth="3" />
    <path d="M114 928l6 40" stroke="#1f4ec8" strokeWidth="3" />
    <circle cx="110" cy="920" r="4" fill="#f4f4f4" />
    <text x="63" y="928" fontSize="11" fill="#3f9a5a" fontFamily="Liberation Sans">Y</text>
    <text x="77" y="939" fontSize="10" fill="#c66a3c" fontFamily="Liberation Sans">X</text>
    <text x="115" y="974" fontSize="11" fill="#1f4ec8" fontFamily="Liberation Sans">Z</text>

    {/* crosshair */}
    <path d="M41 338h148M254 338h1308M221.5 135v169M221.5 372v604" stroke="#d9d9d9" strokeWidth="1.3" />
    <circle cx="221.5" cy="338" r="14" fill="none" stroke="#e8e8e8" strokeWidth="1.2" strokeDasharray="17 5" strokeDashoffset="8" />
    <path d="M206 338h31" stroke="#1a1a1a" strokeWidth="3" />
    <path d="M206 338h31M221.5 322v32" stroke="#efefef" strokeWidth="1" />
    <Speck />
  </svg>
);

export default function App() {
  return (
    <div className="relative h-[976px] w-[1562px] overflow-hidden bg-[#22252a]">
      <div className="flex h-[5px] justify-end gap-[5px] border-b border-[#bdbdbd] bg-[#e2e2e2] pr-[2px]">
        <div className="h-[2px] w-[16px] rounded-b-[2px] border-x border-b border-[#9a9a9a]" />
        <div className="h-[2px] w-[16px] rounded-b-[2px] border-x border-b border-[#9a9a9a]" />
        <div className="h-[2px] w-[16px] rounded-b-[2px] border-x border-b border-[#9a9a9a]" />
      </div>
      <div className="border-b border-[#a6a6a6] bg-[#d9d9d9]">
        <Row1 />
        <Row2 />
      </div>
      <Row3 />
      <StatusBar />
      <div className="flex">
        <Side />
        <Model />
      </div>
      {/* video caption */}
      <div className={`${CJK} absolute left-[736px] top-[897px] text-[45px] font-bold leading-[60px] text-[#e6e6e6] [text-shadow:0_0_2px_#000]`}>
        所以
      </div>
    </div>
  );
}
